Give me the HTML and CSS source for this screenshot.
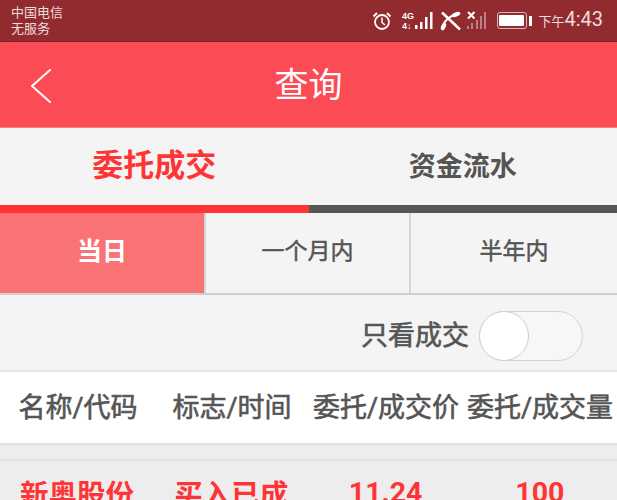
FILE: index.html
```html
<!DOCTYPE html>
<html lang="zh-CN">
<head>
    <meta charset="UTF-8">
    <title>查询</title>
    <link rel="stylesheet" href="styles.css">
</head>
<body>
    <div class="status-bar">
        <div class="carrier">
            <div>中国电信</div>
            <div>无服务</div>
        </div>
        <div class="status-right">
            <svg class="ic-alarm" width="20" height="20" viewBox="0 0 20 20" fill="none" stroke="#fff">
                <circle cx="10" cy="11" r="7" stroke-width="1.8"/>
                <path d="M10 6.500V11.500L13 14" stroke-width="1.500"/>
                <path d="M1.500 5.500L5 2M18.500 5.500L15 2" stroke-width="1.800"/>
            </svg>
            <svg class="ic-signal" width="31" height="20" viewBox="0 0 31 20" fill="#fff">
                <text x="0" y="8" class="sig-label">4G</text>
                <text x="0" y="18" class="sig-label">4↓</text>
                <rect x="13" y="14" width="2.500" height="4"/>
                <rect x="18" y="11" width="2.500" height="7"/>
                <rect x="23" y="6" width="2.500" height="12"/>
                <rect x="28" y="1" width="2.500" height="17"/>
            </svg>
            <svg class="ic-call" width="22" height="20" viewBox="0 0 22 20" fill="#fff" stroke="#fff">
                <ellipse cx="16" cy="3.500" rx="4.500" ry="2.200" stroke="none" transform="rotate(-20 16 3.500)"/>
                <ellipse cx="3.500" cy="15.500" rx="2.200" ry="4" stroke="none" transform="rotate(25 3.500 15.500)"/>
                <path d="M3 14C5 10 8 6.500 13 4.500" fill="none" stroke-width="2"/>
                <path d="M2 1.500L20 18.500" stroke-width="2.500"/>
            </svg>
            <svg class="ic-signal2" width="22" height="20" viewBox="0 0 22 20">
                <path d="M1 1L7.500 7.500M7.500 1L1 7.500" stroke="#fff" stroke-width="2"/>
                <g fill="#fff" fill-opacity="0.4">
                    <rect x="0" y="15" width="2" height="3"/>
                    <rect x="4" y="12" width="2" height="6"/>
                    <rect x="9" y="9" width="2" height="9"/>
                    <rect x="13" y="5" width="2" height="13"/>
                    <rect x="17" y="1" width="2" height="17"/>
                </g>
            </svg>
            <div class="battery">
                <div class="battery-body"><div class="battery-fill"></div></div>
                <div class="battery-tip"></div>
            </div>
            <div class="clock"><span class="clock-ampm">下午</span>4:43</div>
        </div>
    </div>

    <div class="header">
        <svg class="back" width="24" height="36" viewBox="0 0 24 36" fill="none" stroke="#fff" stroke-width="2" stroke-linecap="round" stroke-linejoin="round">
            <path d="M21 1L3 17L21 33"/>
        </svg>
        <div class="title">查询</div>
    </div>

    <div class="tabs">
        <div class="tab tab-active">委托成交</div>
        <div class="tab">资金流水</div>
    </div>
    <div class="indicator">
        <div class="indicator-on"></div>
        <div class="indicator-off"></div>
    </div>

    <div class="periods">
        <div class="period period-active">当日</div>
        <div class="period">一个月内</div>
        <div class="period">半年内</div>
    </div>

    <div class="filter">
        <span class="filter-label">只看成交</span>
        <div class="switch"><div class="knob"></div></div>
    </div>

    <div class="table-head">
        <div>名称/代码</div>
        <div>标志/时间</div>
        <div>委托/成交价</div>
        <div>委托/成交量</div>
    </div>

    <div class="spacer"></div>

    <div class="row">
        <div>新奥股份</div>
        <div>买入已成</div>
        <div>11.24</div>
        <div>100</div>
    </div>
</body>
</html>
```

FILE: styles.css
```css
html, body {
    margin: 0;
    height: 500px;
    overflow: hidden;
}
body {
    font-family: "Roboto", "Noto Sans CJK SC", sans-serif;
    background-color: #ededed;
}
.status-bar {
    height: 41px;
    background-color: #922b30;
    display: flex;
    justify-content: space-between;
    align-items: center;
    color: #fff;
    border-bottom: 1px solid #7d2429;
}
.carrier {
    padding-left: 11px;
    font-size: 13px;
    line-height: 16px;
    color: #f0dcdc;
}
.status-right {
    display: flex;
    align-items: center;
    padding-right: 14px;
}
.ic-alarm {
    margin-right: 10px;
}
.ic-signal {
    margin-right: 7px;
}
.sig-label {
    font-family: "Liberation Sans", sans-serif;
    font-size: 9px;
    font-weight: bold;
}
.ic-call {
    margin-right: 5px;
}
.ic-signal2 {
    margin-right: 8px;
}
.battery {
    display: flex;
    align-items: center;
    margin-right: 6px;
}
.battery-body {
    width: 28px;
    height: 15px;
    border: 1px solid #d8b4b6;
    border-radius: 3px;
}
.battery-fill {
    width: 25px;
    height: 11px;
    margin: 2px 1px;
    background-color: #fff;
    border-radius: 1px;
}
.battery-tip {
    width: 3px;
    height: 10px;
    margin-left: 2px;
    background-color: #fff;
}
.clock {
    font-size: 20px;
    line-height: 24px;
    color: #f0dcdc;
}
.clock-ampm {
    font-size: 13px;
}
.header {
    height: 86px;
    box-sizing: border-box;
    background-color: #fb4b55;
    display: flex;
    align-items: center;
    justify-content: center;
    position: relative;
    border-bottom: 1px solid #fc8088;
}
.back {
    position: absolute;
    left: 29px;
    top: 27px;
}
.title {
    color: #fff;
    font-size: 34px;
    line-height: 44px;
}
.tabs {
    height: 77px;
    background-color: #f4f4f4;
    display: flex;
}
.tab {
    flex: 1;
    display: flex;
    align-items: center;
    justify-content: center;
    padding-bottom: 5px;
    font-size: 27px;
    font-weight: bold;
    color: #555;
}
.tab-active {
    padding-bottom: 9px;
    font-size: 31px;
    color: #ff3436;
}
.indicator {
    height: 8px;
    display: flex;
}
.indicator-on {
    width: 309px;
    background-color: #ff3436;
}
.indicator-off {
    flex: 1;
    background-color: #555;
}
.periods {
    height: 82px;
    box-sizing: border-box;
    display: grid;
    grid-template-columns: 206px 205px 206px;
    background-color: #f4f4f4;
    border-bottom: 2px solid #cfcfcf;
}
.period {
    display: flex;
    align-items: center;
    justify-content: center;
    padding-bottom: 8px;
    font-size: 23px;
    -webkit-text-stroke: 0.5px #555;
    color: #555;
    border-right: 2px solid #d6d6d6;
}
.period:last-child {
    border-right: none;
}
.period-active {
    background-color: #f97374;
    color: #fff;
    font-size: 25px;
    font-weight: bold;
    -webkit-text-stroke: 0;
}
.filter {
    height: 77px;
    box-sizing: border-box;
    background-color: #f4f4f4;
    border-bottom: 2px solid #e4e4e4;
    display: flex;
    align-items: center;
    justify-content: flex-end;
    padding: 7px 34px 0 0;
}
.filter-label {
    font-size: 27px;
    -webkit-text-stroke: 0.6px #555;
    color: #555;
    margin: -6px 10px 0 0;
}
.switch {
    width: 102px;
    height: 48px;
    border: 1px solid #d2d2d2;
    border-radius: 25px;
    background-color: #f6f8f8;
    position: relative;
}
.knob {
    position: absolute;
    left: -1px;
    top: -1px;
    width: 48px;
    height: 48px;
    border: 1px solid #cfcfcf;
    border-radius: 50%;
    background-color: #fff;
}
.table-head, .row {
    display: grid;
    grid-template-columns: repeat(4, 1fr);
    text-align: center;
    align-items: center;
}
.table-head {
    height: 73px;
    box-sizing: border-box;
    padding: 0 0 4px 1px;
    background-color: #fff;
    border-bottom: 2px solid #e0e0e0;
    font-size: 27px;
    -webkit-text-stroke: 0.6px #555;
    color: #555;
    white-space: nowrap;
}
.spacer {
    height: 16px;
    box-sizing: border-box;
    background-color: #ededed;
    border-bottom: 2px solid #e2e2e2;
}
.row {
    height: 62px;
    font-size: 28.500px;
    font-weight: bold;
    color: #ff3436;
    white-space: nowrap;
}
```
